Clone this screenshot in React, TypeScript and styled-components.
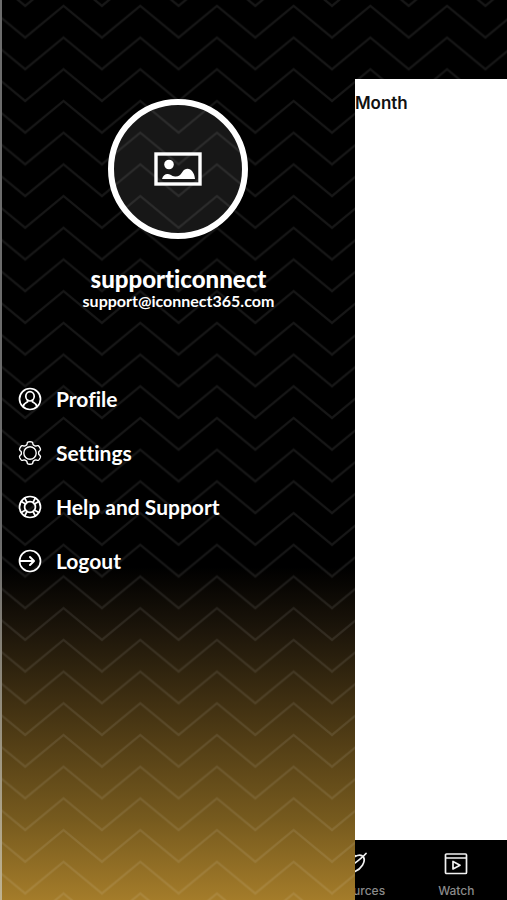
import React, { useId } from "react";
import styled, { createGlobalStyle } from "styled-components";

const GlobalStyle = createGlobalStyle`
  *, *::before, *::after { box-sizing: border-box; }
  body { margin: 0; background: #000; }
`;

const Screen = styled.div`
  position: relative;
  display: flex;
  flex-direction: column;
  min-height: 100vh;
  overflow: hidden;
  background: #000;
  font-family: Lato, "Open Sans", sans-serif;
  font-variant-ligatures: none;
`;

const PatternSvg = styled.svg`
  position: absolute;
  inset: 0;
  width: 100%;
  height: 100%;
  pointer-events: none;
`;

const StatusArea = styled.header`
  position: relative;
  height: 79px;
  overflow: hidden;
`;

const Content = styled.main`
  flex: 1;
  padding: 12px 0 0 70%;
  background: #fff;
`;

const ContentTitle = styled.h1`
  margin: 0;
  color: #111;
  font: 600 17px/24px Inter, sans-serif;
`;

const TabBar = styled.nav`
  display: grid;
  grid-template-columns: repeat(5, 1fr);
  height: 60px;
  background: #000;
`;

const Tab = styled.a<{ $column: number }>`
  grid-column: ${(p) => p.$column};
  display: flex;
  flex-direction: column;
  align-items: center;
  gap: 7px;
  padding-top: 12px;
  color: #8b8b8b;
  font: 500 12px/16px Inter, sans-serif;
  text-decoration: none;

  svg { color: #f2f2f2; }
`;

const Drawer = styled.aside`
  position: absolute;
  inset: 0 auto 0 0;
  width: 70%;
  overflow: hidden;
  color: #fff;
  background: linear-gradient(#000 63%, #1c150a 70%, #4c3914 81%, #765a1e 91%, #a47c2a 100%);
`;

const DrawerBody = styled.div`
  position: relative;
  display: flex;
  flex-direction: column;
  padding: 99px 0 0 2px;
`;

const DrawerEdge = styled.div`
  position: absolute;
  inset: 0 auto 0 0;
  width: 2px;
  background: linear-gradient(#6c6c6c 60%, #c0b391);
`;

const Account = styled.section`
  display: flex;
  flex-direction: column;
  align-items: center;
`;

const Avatar = styled.button`
  display: grid;
  place-items: center;
  width: 140px;
  height: 140px;
  padding: 0;
  border: 6px solid #fff;
  border-radius: 50%;
  color: #fff;
  background: rgba(255, 255, 255, 0.09);
`;

const AccountName = styled.h2`
  margin: 26px 0 0;
  font-size: 24px;
  font-weight: 900;
  line-height: 28px;
`;

const AccountEmail = styled.p`
  margin: 0;
  font-size: 16px;
  font-weight: 700;
  line-height: 16px;
`;

const Menu = styled.nav`
  display: flex;
  flex-direction: column;
  margin-top: 63px;
`;

const MenuLink = styled.a`
  display: flex;
  align-items: center;
  gap: 14px;
  height: 54px;
  padding-left: 16px;
  color: #fff;
  font-size: 21px;
  font-weight: 700;
  line-height: 24px;
  text-decoration: none;
`;

function Chevrons() {
  const id = useId();
  return (
    <PatternSvg aria-hidden="true">
      <defs>
        <pattern id={id} x="25.2" y="5.9" width="76.7" height="31.7" patternUnits="userSpaceOnUse">
          <path
            d="M-38.35 -31.7L0 0L38.35 -31.7L76.7 0L115 -31.7M-38.35 0L0 31.7L38.35 0L76.7 31.7L115 0M-38.35 31.7L0 63.4L38.35 31.7L76.7 63.4L115 31.7"
            fill="none"
            stroke="#fff"
            strokeOpacity="0.09"
            strokeWidth="2.2"
          />
        </pattern>
      </defs>
      <rect width="100%" height="100%" fill={`url(#${id})`} />
    </PatternSvg>
  );
}

const PictureIcon = () => (
  <svg width="48" height="34" viewBox="0 0 48 34" aria-hidden="true">
    <rect x="2" y="2" width="44" height="30" fill="none" stroke="currentColor" strokeWidth="3.4" />
    <circle cx="15" cy="12.5" r="4.8" fill="currentColor" />
    <path
      d="M8 27C9 23 12 21.5 14 22C17 22.3 18 24.3 20 24.3C24 25 26 23.5 28 20.5C30 17.5 31.5 16.8 33.5 16.8C37.5 17 40.5 21 41 27Z"
      fill="currentColor"
    />
  </svg>
);

const LineIcon = ({ children }: { children: React.ReactNode }) => (
  <svg
    width="24"
    height="24"
    viewBox="0 0 24 24"
    fill="none"
    stroke="currentColor"
    strokeWidth="1.7"
    strokeLinecap="round"
    strokeLinejoin="round"
    aria-hidden="true"
  >
    {children}
  </svg>
);

const ProfileIcon = () => (
  <LineIcon>
    <circle cx="12" cy="12" r="10.5" />
    <ellipse cx="12" cy="9.3" rx="4.2" ry="4.7" />
    <path d="M5.2 19.6C6 16.2 8 15.8 9.6 14.8V13.2M18.8 19.6C18 16.2 16 15.8 14.4 14.8V13.2" />
  </LineIcon>
);

const GEAR_TEETH = 6;

const gear = (() => {
  const points: string[] = [];
  for (let i = 0; i < 160; i++) {
    const a = (i / 160) * Math.PI * 2;
    const wave = Math.tanh(2.4 * (Math.cos(GEAR_TEETH * a) + 0.2));
    const r = 9.9 + 1.3 * wave;
    points.push(`${(12 + r * Math.sin(a)).toFixed(2)} ${(12 - r * Math.cos(a)).toFixed(2)}`);
  }
  return `M${points.join("L")}Z`;
})();

const SettingsIcon = () => (
  <LineIcon>
    <path d={gear} strokeWidth="1.4" />
    <circle cx="12" cy="12" r="6.2" strokeWidth="1.4" />
  </LineIcon>
);

const HelpIcon = () => (
  <LineIcon>
    <circle cx="12" cy="12" r="10.5" />
    <circle cx="12" cy="12" r="5.4" />
    <path d="M6.7 3L9 7.5M3.3 6.5L7.6 9M17.3 3L15 7.5M20.7 6.5L16.4 9M6.7 21L9 16.5M3.3 17.5L7.6 15M17.3 21L15 16.5M20.7 17.5L16.4 15" />
  </LineIcon>
);

const LogoutIcon = () => (
  <LineIcon>
    <circle cx="12" cy="12" r="10.5" />
    <path d="M2 12H15.5M12 8L16 12L12 16" strokeWidth="2" />
  </LineIcon>
);

const ResourcesIcon = () => (
  <LineIcon>
    <path d="M12 3.5C4 3.5 1.5 9 3 14C4.5 19 9 21.5 12 19.5C18 17 23 10 20.5 5C18.5 2.5 15 2.8 12 4.5" />
    <path d="M10 12.5C14 9.5 19 6 23 1.5" />
  </LineIcon>
);

const WatchIcon = () => (
  <LineIcon>
    <rect x="1.5" y="2" width="21" height="19.5" rx="1" />
    <path d="M2 6H22M9 9.5V17L16 13.2Z" />
  </LineIcon>
);

const menuItems = [
  { label: "Profile", Icon: ProfileIcon },
  { label: "Settings", Icon: SettingsIcon },
  { label: "Help and Support", Icon: HelpIcon },
  { label: "Logout", Icon: LogoutIcon },
];

export default function App() {
  return (
    <>
      <GlobalStyle />
      <Screen>
        <StatusArea>
          <Chevrons />
        </StatusArea>
        <Content>
          <ContentTitle>Month</ContentTitle>
        </Content>
        <TabBar aria-label="Sections">
          <Tab href="#resources" $column={4}>
            <ResourcesIcon />
            Resources
          </Tab>
          <Tab href="#watch" $column={5}>
            <WatchIcon />
            Watch
          </Tab>
        </TabBar>
        <Drawer>
          <Chevrons />
          <DrawerEdge />
          <DrawerBody>
            <Account>
              <Avatar type="button" aria-label="Change picture">
                <PictureIcon />
              </Avatar>
              <AccountName>supporticonnect</AccountName>
              <AccountEmail>support@iconnect365.com</AccountEmail>
            </Account>
            <Menu aria-label="Account">
              {menuItems.map(({ label, Icon }) => (
                <MenuLink key={label} href={`#${label.toLowerCase().replace(/ /g, "-")}`}>
                  <Icon />
                  {label}
                </MenuLink>
              ))}
            </Menu>
          </DrawerBody>
        </Drawer>
      </Screen>
    </>
  );
}
